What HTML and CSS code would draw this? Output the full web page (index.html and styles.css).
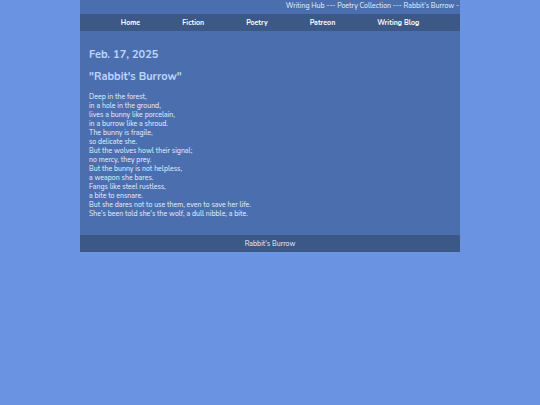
FILE: index.html
```html
<!DOCTYPE html>
<html lang="en">
<head>
    <meta charset="UTF-8">
    <meta name="viewport" content="width=device-width, initial-scale=1.0">
    <title>Rabbit's Burrow</title>
    <link rel="stylesheet" href="styles.css">
</head>
<body>
    <div class="container">
        <div class="ticker">Writing Hub --- Poetry Collection --- Rabbit's Burrow -</div>

        <nav class="navbar">
            <a href="#home">Home</a>
            <a href="#fiction">Fiction</a>
            <a href="#poetry">Poetry</a>
            <a href="#patreon">Patreon</a>
            <a href="#blog">Writing Blog</a>
        </nav>

        <main class="poem">
            <h1>Feb. 17, 2025</h1>
            <h2>"Rabbit's Burrow"</h2>
            <p>
                Deep in the forest,<br>
                in a hole in the ground,<br>
                lives a bunny like porcelain,<br>
                in a burrow like a shroud.<br>
                The bunny is fragile,<br>
                so delicate she.<br>
                But the wolves howl their signal;<br>
                no mercy, they prey.<br>
                But the bunny is not helpless,<br>
                a weapon she bares.<br>
                Fangs like steel rustless,<br>
                a bite to ensnare.<br>
                But she dares not to use them, even to save her life.<br>
                She's been told she's the wolf, a dull nibble, a bite.
            </p>
        </main>

        <footer class="footer">Rabbit's Burrow</footer>
    </div>
</body>
</html>
```

FILE: styles.css
```css
body {
    margin: 0;
    padding: 0 80px;
    font-family: Nunito, Lato, sans-serif;
    font-size: 7px;
    line-height: 9px;
    background-color: #6a94e2;
    color: #e8f0ff;
}

.container {
    background-color: #4b6fae;
}

.ticker {
    padding: 1px 1px 4px;
    text-align: right;
    white-space: nowrap;
    overflow: hidden;
}

.navbar {
    display: flex;
    justify-content: center;
    gap: 42px;
    padding: 4px 0;
    background-color: #3c5886;
}

.navbar a {
    color: #fff;
    font-weight: bold;
    text-decoration: none;
}

.poem {
    padding: 17px 9px;
}

.poem h1,
.poem h2 {
    margin: 0 0 8px;
    font-size: 11px;
    font-weight: bold;
    line-height: 14px;
    color: #bdd4ff;
}

.poem p {
    margin: 0;
}

.footer {
    padding: 4px 0;
    text-align: center;
    background-color: #3c5886;
}
```
